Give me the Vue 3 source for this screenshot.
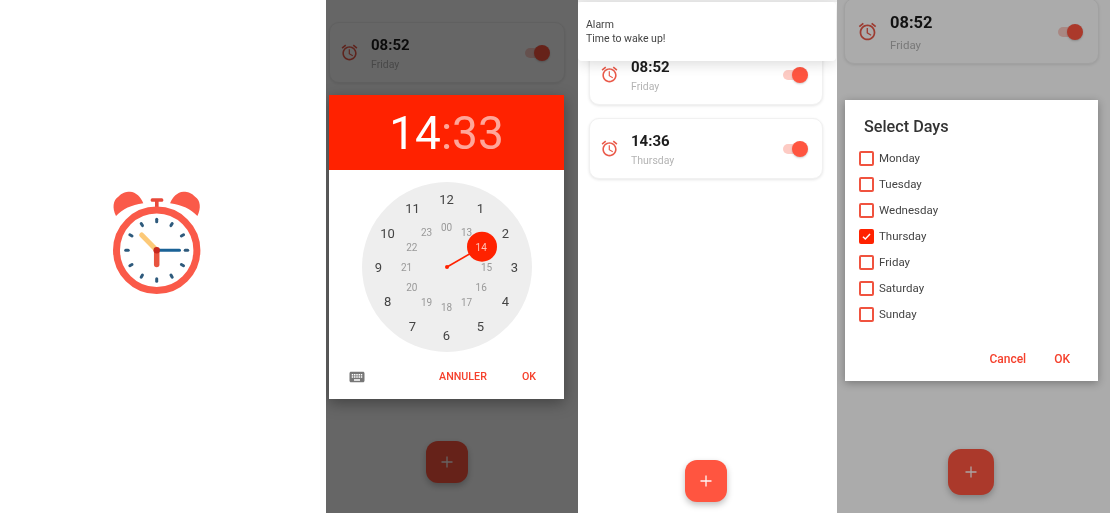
<script setup>
const alarmPath =
  'M22 5.72l-4.6-3.86-1.29 1.53 4.6 3.86L22 5.72zM7.88 3.39L6.6 1.86 2 5.71l1.29 1.53 4.59-3.85zM12.5 8H11v6l4.75 2.85.75-1.23-4-2.37V8zM12 4c-4.97 0-9 4.03-9 9s4.02 9 9 9c4.97 0 9-4.03 9-9s-4.03-9-9-9zm0 16c-3.87 0-7-3.13-7-7s3.13-7 7-7 7 3.13 7 7-3.13 7-7 7z'
const keyboardPath =
  'M20 5H4c-1.1 0-1.99.9-1.99 2L2 17c0 1.1.9 2 2 2h16c1.1 0 2-.9 2-2V7c0-1.1-.9-2-2-2zm-9 3h2v2h-2V8zm0 3h2v2h-2v-2zM8 8h2v2H8V8zm0 3h2v2H8v-2zm-1 2H5v-2h2v2zm0-3H5V8h2v2zm9 7H8v-2h8v2zm0-4h-2v-2h2v2zm0-3h-2V8h2v2zm3 3h-2v-2h2v2zm0-3h-2V8h2v2z'

const days = [
  { name: 'Monday', checked: false },
  { name: 'Tuesday', checked: false },
  { name: 'Wednesday', checked: false },
  { name: 'Thursday', checked: true },
  { name: 'Friday', checked: false },
  { name: 'Saturday', checked: false },
  { name: 'Sunday', checked: false },
]

const center = { x: 156.7, y: 250.3 }
const ticks = Array.from({ length: 12 }, (_, i) => i * 30)

function dialStyle(step, radius) {
  const angle = (step * 30 * Math.PI) / 180
  return {
    left: `${85 + radius * Math.sin(angle)}px`,
    top: `${85 - radius * Math.cos(angle)}px`,
  }
}

const outer = Array.from({ length: 12 }, (_, i) => ({
  label: String(i === 0 ? 12 : i),
  style: dialStyle(i, 68),
}))
const inner = Array.from({ length: 12 }, (_, i) => ({
  label: i === 0 ? '00' : String(12 + i),
  style: dialStyle(i, 40),
})).filter((n) => n.label !== '14')
</script>

<template>
  <main class="board">
    <!-- splash -->
    <section class="screen splash">
      <svg class="logo" viewBox="109 188 96 108" width="96" height="108">
        <path d="M116 216C112 208 113 200 118.3 196.7 122 192.5 127 191.5 130 191.7 136 192 141 197 143.3 203.3 131 205 123 209 116 216Z" fill="#fa5a49" />
        <path d="M197.4 216C201.4 208 200.4 200 195.1 196.7 191.4 192.5 186.4 191.5 183.4 191.7 177.4 192 172.4 197 170.1 203.3 182.4 205 190.4 209 197.4 216Z" fill="#fa5a49" />
        <rect x="150.7" y="198.3" width="12.6" height="3.4" rx="1.5" fill="#e8493a" />
        <rect x="155" y="200" width="3.6" height="8" fill="#e8493a" />
        <circle :cx="center.x" :cy="center.y" r="40.2" fill="#fff" stroke="#fa5a49" stroke-width="7" />
        <g v-for="a in ticks" :key="a" :transform="`rotate(${a} ${center.x} ${center.y})`">
          <line :x1="center.x" :y1="center.y - 31" :x2="center.x" :y2="center.y - 28.5" stroke="#2e5a7c" stroke-width="3" stroke-linecap="round" />
        </g>
        <line :x1="center.x" :y1="center.y" x2="141.7" y2="235" stroke="#fcc978" stroke-width="5" stroke-linecap="round" />
        <line :x1="center.x" :y1="center.y" x2="156.7" y2="264.5" stroke="#e8543f" stroke-width="5.5" stroke-linecap="round" />
        <line :x1="center.x" :y1="center.y" x2="179.5" y2="250.3" stroke="#1a6296" stroke-width="3" stroke-linecap="round" />
        <circle :cx="center.x" :cy="center.y" r="3.2" fill="#c8281e" />
      </svg>
    </section>

    <!-- time picker -->
    <section class="screen picker-screen">
      <article class="card">
        <svg class="alarm" viewBox="0 0 24 24"><path :d="alarmPath" /></svg>
        <div class="card-text">
          <strong>08:52</strong>
          <span>Friday</span>
        </div>
        <div class="toggle" />
      </article>
      <div class="scrim heavy" />
      <div class="picker">
        <header class="picker-head">14<span>:33</span></header>
        <div class="dial">
          <span v-for="n in outer" :key="n.label" class="num" :style="n.style">{{ n.label }}</span>
          <span v-for="n in inner" :key="n.label" class="num small" :style="n.style">{{ n.label }}</span>
          <svg class="hand" viewBox="0 0 170 170">
            <line x1="85" y1="85" x2="119.6" y2="65" stroke="#ff2200" stroke-width="1.6" />
            <circle cx="85" cy="85" r="2" fill="#ff2200" />
            <circle cx="120" cy="64.7" r="15" fill="#ff2200" />
          </svg>
          <span class="num small picked" :style="dialStyle(2, 40)">14</span>
        </div>
        <footer class="picker-foot">
          <svg class="keyboard" viewBox="0 0 24 24"><path :d="keyboardPath" /></svg>
          <button>ANNULER</button>
          <button>OK</button>
        </footer>
      </div>
      <button class="fab">
        <svg viewBox="0 0 14 14"><path d="M7 1.5v11M1.5 7h11" /></svg>
      </button>
    </section>

    <!-- alarm list -->
    <section class="screen list-screen">
      <div class="notice">
        <p>Alarm</p>
        <p>Time to wake up!</p>
      </div>
      <article class="card">
        <svg class="alarm" viewBox="0 0 24 24"><path :d="alarmPath" /></svg>
        <div class="card-text">
          <strong>08:52</strong>
          <span>Friday</span>
        </div>
        <div class="toggle" />
      </article>
      <article class="card">
        <svg class="alarm" viewBox="0 0 24 24"><path :d="alarmPath" /></svg>
        <div class="card-text">
          <strong>14:36</strong>
          <span>Thursday</span>
        </div>
        <div class="toggle" />
      </article>
      <button class="fab">
        <svg viewBox="0 0 14 14"><path d="M7 1.5v11M1.5 7h11" /></svg>
      </button>
    </section>

    <!-- day select -->
    <section class="screen days-screen">
      <article class="card large">
        <svg class="alarm" viewBox="0 0 24 24"><path :d="alarmPath" /></svg>
        <div class="card-text">
          <strong>08:52</strong>
          <span>Friday</span>
        </div>
        <div class="toggle" />
      </article>
      <div class="scrim" />
      <div class="days">
        <h2>Select Days</h2>
        <ul>
          <li v-for="day in days" :key="day.name">
            <i class="box" :class="{ on: day.checked }">
              <svg v-if="day.checked" viewBox="0 0 14 14"><path d="M2.5 7.2l3 2.9L11.5 3.8" /></svg>
            </i>
            {{ day.name }}
          </li>
        </ul>
        <footer class="days-foot">
          <button>Cancel</button>
          <button>OK</button>
        </footer>
      </div>
      <button class="fab big">
        <svg viewBox="0 0 14 14"><path d="M7 1.5v11M1.5 7h11" /></svg>
      </button>
    </section>
  </main>
</template>

<style>
body {
  background: #fff;
}
</style>

<style scoped>
.board {
  display: grid;
  grid-template-columns: 326px 252px 259px 273px;
  height: 513px;
  overflow: hidden;
  font-family: Roboto, "Liberation Sans", sans-serif;
  filter: blur(0.4px);
}

.screen {
  position: relative;
  display: flex;
  flex-direction: column;
  height: 513px;
  overflow: hidden;
  background: #fff;
}

.splash {
  align-items: center;
  justify-content: center;
  padding: 0 12px 29px 0;
  box-sizing: border-box;
}

.scrim {
  position: absolute;
  inset: 0;
  z-index: 1;
  background: rgba(0, 0, 0, 0.33);
}

.scrim.heavy {
  background: rgba(0, 0, 0, 0.6);
}

/* cards */
.card {
  display: flex;
  align-items: center;
  flex: none;
  gap: 12px;
  box-sizing: border-box;
  height: 61px;
  padding: 2px 15px 0 10px;
  border-radius: 10px;
  background: #fff;
  border: 1px solid #f1f1f1;
  box-shadow: 0 1px 3px rgba(0, 0, 0, 0.1);
}

.alarm {
  width: 19px;
  height: 19px;
  flex: none;
  margin-top: -3px;
  fill: #ea5a4a;
}

.card-text {
  display: flex;
  flex-direction: column;
  gap: 4px;
  flex: 1;
}

.card-text strong {
  font-size: 15px;
  line-height: 18px;
  font-weight: 700;
  color: #1c1c1c;
}

.card-text span {
  font-size: 10.5px;
  line-height: 14px;
  color: #b4b4b4;
}

.toggle {
  position: relative;
  width: 24px;
  height: 10px;
  margin-top: -1px;
  border-radius: 5px;
  background: #fdcbc4;
}

.toggle::after {
  content: '';
  position: absolute;
  right: -1px;
  top: -3px;
  width: 16px;
  height: 16px;
  border-radius: 50%;
  background: #ff5540;
  box-shadow: 0 1px 2px rgba(0, 0, 0, 0.2);
}

.large {
  height: 66px;
  margin-top: -2px;
  padding: 2px 16px 0 12px;
  gap: 12px;
}

.large .alarm {
  width: 21px;
  height: 21px;
  margin-top: -1px;
}

.large .card-text {
  gap: 5px;
}

.large strong {
  font-size: 16.5px;
  line-height: 20px;
}

.large .card-text span {
  font-size: 11.5px;
}

/* fab */
.fab {
  display: flex;
  align-items: center;
  justify-content: center;
  flex: none;
  width: 42px;
  height: 42px;
  padding: 0;
  border: 0;
  border-radius: 12px;
  background: #ff5540;
  box-shadow: 0 3px 6px rgba(0, 0, 0, 0.25);
}

.fab svg {
  width: 14px;
  height: 14px;
  fill: none;
  stroke: #fff;
  stroke-width: 1.3;
  opacity: 0.95;
}

.fab.big {
  width: 46px;
  height: 46px;
  margin: 68px 1px 0 0;
  border-radius: 13px;
}

/* time picker */
.picker-screen {
  align-items: center;
  padding: 22px 14px 0 3px;
  box-sizing: border-box;
}

.picker-screen .card {
  align-self: stretch;
  margin-right: -1px;
}

.picker-screen .fab {
  margin-top: 42px;
}

.picker {
  position: relative;
  z-index: 2;
  align-self: stretch;
  height: 304px;
  margin-top: 12px;
  background: #fff;
  box-shadow: 0 4px 14px rgba(0, 0, 0, 0.35);
}

.picker-head {
  height: 73px;
  padding-top: 2px;
  background: #ff2200;
  color: #fff;
  font-size: 46px;
  font-weight: 400;
  line-height: 73px;
  text-align: center;
}

.picker-head span {
  color: rgba(255, 255, 255, 0.6);
}

.dial {
  position: relative;
  width: 170px;
  height: 170px;
  margin: 12px auto 0;
  border-radius: 50%;
  background: #eeeeee;
}

.hand {
  position: absolute;
  inset: 0;
  width: 170px;
  height: 170px;
}

.num {
  position: absolute;
  z-index: 1;
  transform: translate(-50%, -50%);
  font-size: 13px;
  color: #444;
}

.num.small {
  font-size: 10px;
  color: #999;
}

.num.picked {
  color: #ffc4b8;
}

.picker-foot {
  display: flex;
  align-items: center;
  gap: 35px;
  margin-top: 16px;
  padding: 0 28px 0 19px;
}

.keyboard {
  width: 18px;
  height: 18px;
  margin-right: auto;
  fill: #777;
}

button {
  padding: 0;
  border: 0;
  background: none;
  font-family: inherit;
}

.picker-foot button {
  font-size: 10.7px;
  line-height: 16px;
  font-weight: 500;
  color: #f5402c;
}

.days-foot button {
  font-size: 12px;
  line-height: 16px;
  font-weight: 500;
  color: #f5402c;
}

/* alarm list */
.list-screen {
  align-items: stretch;
  gap: 13px;
  padding: 44px 14px 11px 11px;
  box-sizing: border-box;
}

.list-screen::before {
  content: '';
  position: absolute;
  left: 0;
  right: 0;
  top: 0;
  height: 2px;
  background: #eeeeee;
}

.list-screen .fab {
  align-self: center;
  margin-top: auto;
}

.notice {
  position: absolute;
  z-index: 2;
  left: 0;
  right: 1px;
  top: 2px;
  height: 59px;
  box-sizing: border-box;
  padding: 16px 8px 0;
  border-radius: 4px;
  background: #fff;
  box-shadow: 0 3px 14px rgba(0, 0, 0, 0.14);
}

.notice p {
  margin: 0;
  font-size: 10.5px;
  line-height: 14px;
  color: #444;
}

/* days dialog */
.days-screen {
  align-items: center;
  padding: 0 11px 0 7px;
  box-sizing: border-box;
}

.days-screen .card {
  align-self: stretch;
}

.days {
  position: relative;
  z-index: 2;
  align-self: stretch;
  height: 281px;
  margin: 36px 1px 0;
  padding: 17px 28px 0 14px;
  box-sizing: border-box;
  background: #fff;
  box-shadow: 0 2px 8px rgba(0, 0, 0, 0.3);
}

.days h2 {
  margin: 0 0 8px 5px;
  font-size: 16.2px;
  line-height: 20px;
  font-weight: 500;
  color: #333;
}

.days ul {
  margin: 0;
  padding: 0;
  list-style: none;
}

.days li {
  display: flex;
  align-items: center;
  gap: 5px;
  height: 26px;
  font-size: 11.5px;
  color: #444;
}

.box {
  display: block;
  flex: none;
  width: 15px;
  height: 15px;
  box-sizing: border-box;
  border: 2px solid #f0533f;
  border-radius: 2px;
}

.box.on {
  background: #ff2200;
  border-color: #ff2200;
}

.box svg {
  display: block;
  width: 11px;
  height: 11px;
  fill: none;
  stroke: #fff;
  stroke-width: 1.8;
}

.days-foot {
  display: flex;
  justify-content: flex-end;
  gap: 28px;
  margin-top: 24px;
}
</style>
